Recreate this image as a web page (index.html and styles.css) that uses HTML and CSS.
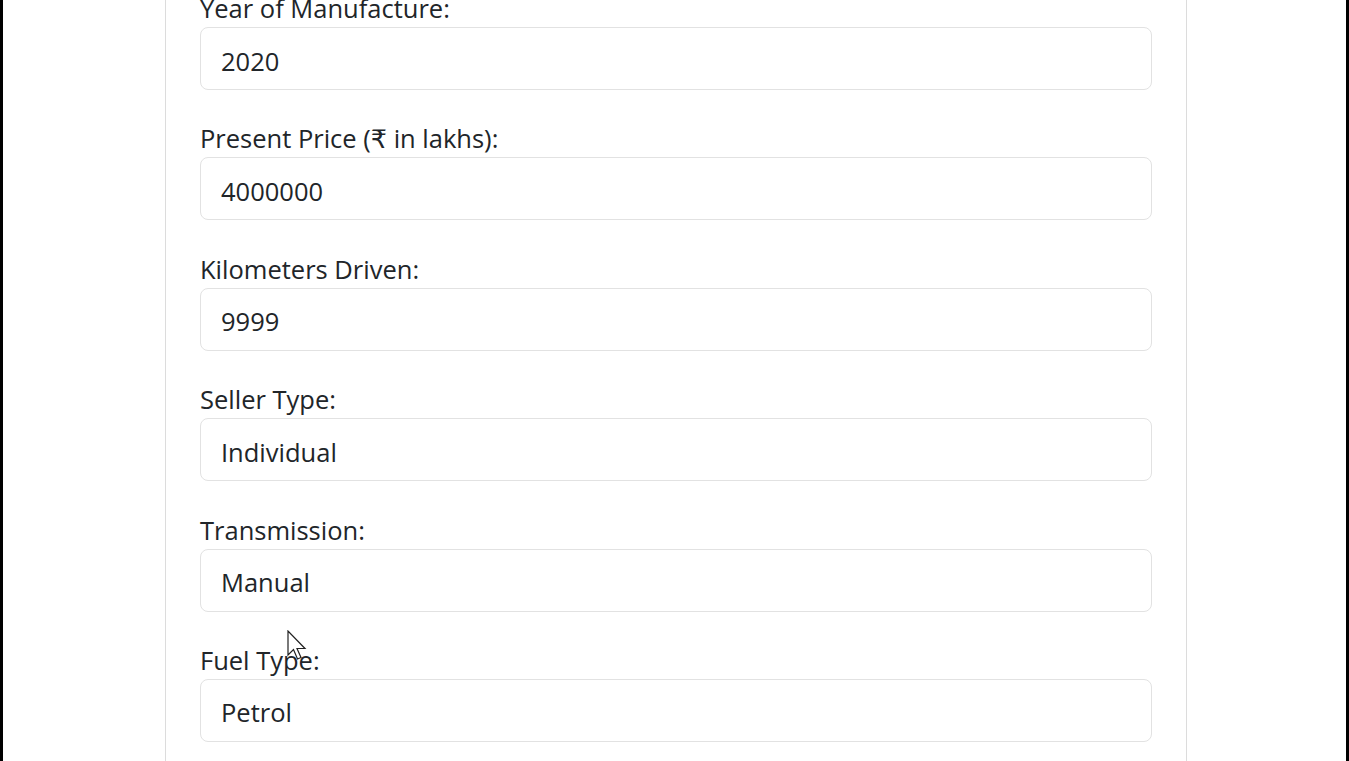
FILE: index.html
```html
<!DOCTYPE html>
<html lang="en">
<head>
<meta charset="utf-8">
<title>Car Price Prediction</title>
<link rel="stylesheet" href="styles.css">
</head>
<body>
<div class="screen">
  <div class="card">
    <form class="form">
      <div class="group">
        <label class="label" for="year">Year of Manufacture:</label>
        <input class="control" id="year" type="text" value="2020">
      </div>
      <div class="group">
        <label class="label" for="price">Present Price (₹ in lakhs):</label>
        <input class="control" id="price" type="text" value="4000000">
      </div>
      <div class="group">
        <label class="label" for="kms">Kilometers Driven:</label>
        <input class="control" id="kms" type="text" value="9999">
      </div>
      <div class="group">
        <label class="label" for="seller">Seller Type:</label>
        <input class="control" id="seller" type="text" value="Individual">
      </div>
      <div class="group">
        <label class="label" for="trans">Transmission:</label>
        <input class="control" id="trans" type="text" value="Manual">
      </div>
      <div class="group">
        <label class="label" for="fuel">Fuel Type:</label>
        <input class="control" id="fuel" type="text" value="Petrol">
      </div>
    </form>
  </div>
  <svg class="cursor" width="22" height="32" viewBox="0 0 22 32">
    <path d="M1 1 L1 25 L6.5 19.5 L10.5 29 L14 27.5 L10 18.5 L18 18.5 Z" fill="#fff" stroke="#222" stroke-width="1.2" stroke-linejoin="miter"/>
  </svg>
</div>
</body>
</html>
```

FILE: styles.css
```css
* { box-sizing: border-box; }
html, body {
  margin: 0;
  padding: 0;
  height: 100%;
  overflow: hidden;
  background: #000;
}
.screen {
  position: relative;
  margin: 0 3px;
  height: 761px;
  background: #fff;
  overflow: hidden;
}
.card {
  margin-left: 162px;
  width: 1022px;
  height: 800px;
  margin-top: -20px;
  border: 1px solid #dcdcdc;
  border-top: none;
  border-bottom: none;
  padding: 8px 34px 0;
  font-family: "Open Sans", "DejaVu Sans", sans-serif;
  color: #212529;
}
.form {
  display: flex;
  flex-direction: column;
}
.group {
  display: flex;
  flex-direction: column;
  margin-bottom: 28.4px;
}
.label {
  display: block;
  font-size: 25.5px;
  line-height: 39px;
  height: 39px;
  padding-top: 1px;
}
.control {
  display: block;
  width: 100%;
  height: 63px;
  padding: 12px 20px 8px;
  border: 1px solid #e2e2e2;
  border-radius: 8px;
  font-family: "Open Sans", "DejaVu Sans", sans-serif;
  font-size: 25.5px;
  color: #212529;
  background: #fff;
  outline: none;
}
.cursor {
  position: absolute;
  left: 284px;
  top: 630px;
}
```
